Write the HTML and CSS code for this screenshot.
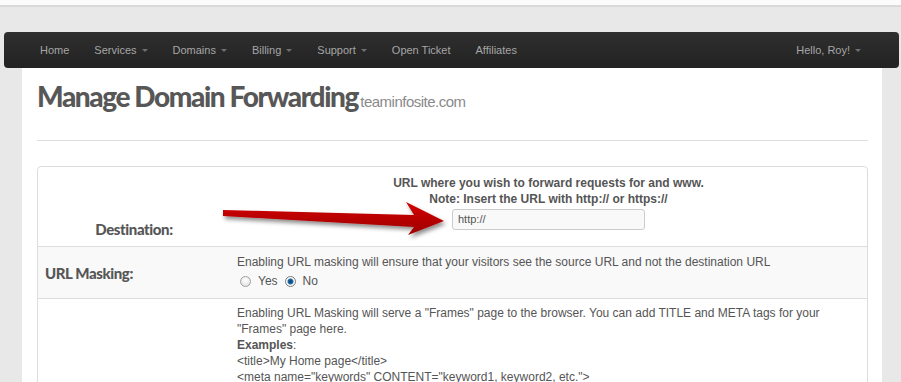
FILE: index.html
```html
<!DOCTYPE html>
<html>
<head>
<meta charset="utf-8">
<link rel="stylesheet" href="styles.css">
</head>
<body>
<div class="topbar"></div>
<nav class="navbar">
  <ul class="nav">
    <li>Home</li>
    <li>Services<span class="caret"></span></li>
    <li>Domains<span class="caret"></span></li>
    <li>Billing<span class="caret"></span></li>
    <li>Support<span class="caret"></span></li>
    <li>Open Ticket</li>
    <li>Affiliates</li>
  </ul>
  <div class="user">Hello, Roy!<span class="caret"></span></div>
</nav>
<div class="page">
  <h1>Manage Domain Forwarding <small>teaminfosite.com</small></h1>
  <hr class="rule">
  <div class="form">
    <div class="row row-dest">
      <div class="label label-dest">Destination:</div>
      <div class="field field-dest">
        <div class="strong">URL where you wish to forward requests for and www.</div>
        <div class="strong">Note: Insert the URL with http:// or https://</div>
        <div class="input">http://</div>
      </div>
    </div>
    <div class="row row-mask">
      <div class="label label-mask">URL Masking:</div>
      <div class="field">
        <div>Enabling URL masking will ensure that your visitors see the source URL and not the destination URL</div>
        <div class="radios">
          <span class="radio"></span><span class="rlabel">Yes</span>
          <span class="radio checked"></span><span class="rlabel">No</span>
        </div>
      </div>
    </div>
    <div class="row row-meta">
      <div class="label"></div>
      <div class="field">
        <div>Enabling URL Masking will serve a "Frames" page to the browser. You can add TITLE and META tags for your "Frames" page here.</div>
        <div><b>Examples</b>:</div>
        <div>&lt;title&gt;My Home page&lt;/title&gt;</div>
        <div>&lt;meta name="keywords" CONTENT="keyword1, keyword2, etc."&gt;</div>
      </div>
    </div>
    <svg class="arrow" width="232" height="44" viewBox="0 0 232 44">
      <defs>
        <filter id="sh" x="-10%" y="-30%" width="130%" height="180%">
          <feDropShadow dx="2" dy="3" stdDeviation="2" flood-color="#000" flood-opacity="0.45"/>
        </filter>
        <linearGradient id="rg" x1="0" y1="0" x2="0" y2="1">
          <stop offset="0" stop-color="#d40000"/>
          <stop offset="1" stop-color="#9c0000"/>
        </linearGradient>
      </defs>
      <polygon filter="url(#sh)" fill="url(#rg)" points="4,11 195,16 187,3 225,22 189,36 195,28 4,17"/>
    </svg>
  </div>
</div>
</body>
</html>
```
FILE: styles.css
```css
html, body {
  margin: 0;
  padding: 0;
}
body {
  background: #e8e8e8;
  font-family: "Liberation Sans", Arial, sans-serif;
  font-size: 12px;
  color: #555;
  overflow: hidden;
}
.topbar {
  height: 5px;
  background: #fbfbfb;
  border-bottom: 2px solid #d9d9d9;
}
.navbar {
  margin: 25px 2px 0 4px;
  height: 36px;
  border-radius: 4px;
  background: linear-gradient(#2f2f2f, #222222);
  display: flex;
  align-items: center;
  justify-content: space-between;
  padding: 0 38px 0 36px;
  font-size: 11px;
  color: #a6a6a6;
}
.nav {
  list-style: none;
  margin: 0;
  padding: 0;
  display: flex;
  gap: 25px;
}
.nav li, .user {
  display: flex;
  align-items: center;
}
.caret {
  display: inline-block;
  width: 0;
  height: 0;
  margin-left: 5px;
  border-left: 3px solid transparent;
  border-right: 3px solid transparent;
  border-top: 3px solid #6f6f6f;
  margin-top: 1px;
}
.page {
  margin: 0 19px 0 22px;
  background: #fff;
  padding: 8px 14px 40px 15px;
}
h1 {
  margin: 0;
  font-family: Lato, "Open Sans", sans-serif;
  font-weight: 900;
  font-size: 28px;
  line-height: 40px;
  letter-spacing: -1.4px;
  color: #575757;
}
h1 small {
  font-family: "Liberation Sans", Arial, sans-serif;
  font-weight: 400;
  font-size: 15px;
  letter-spacing: -0.5px;
  color: #8a8a8a;
  margin-left: -3px;
}
.rule {
  margin: 18px 0 25px;
  border: 0;
  border-top: 1px solid #dedede;
  height: 0;
}
.form {
  position: relative;
  border: 1px solid #dddddd;
  border-radius: 4px;
}
.row {
  display: grid;
  grid-template-columns: 192px 1fr;
  line-height: 16px;
}
.row + .row {
  border-top: 1px solid #dddddd;
}
.label {
  font-family: Lato, "Open Sans", sans-serif;
  font-weight: 900;
  font-size: 15px;
  color: #565656;
  letter-spacing: -0.4px;
}
.label-dest {
  display: flex;
  align-items: flex-end;
  justify-content: center;
  padding-bottom: 9px;
}
.label-mask {
  display: flex;
  align-items: center;
  padding-left: 7px;
}
.field {
  padding: 7px 8px 6px 7px;
}
.row-dest .field {
  padding: 8px 0 16px 0;
  text-align: center;
  display: flex;
  flex-direction: column;
  align-items: center;
}
.strong {
  font-weight: bold;
}
.input {
  margin-top: 2px;
  width: 186px;
  height: 19px;
  border: 1px solid #cccccc;
  border-radius: 3px;
  background: #f9f9f9;
  text-align: left;
  padding-left: 5px;
  font-size: 11px;
  line-height: 19px;
  color: #555;
}
.row-mask {
  background: #f9f9f9;
}
.row-mask .field {
  padding-bottom: 6px;
}
.radios {
  display: flex;
  align-items: center;
  height: 22px;
  padding-left: 3px;
}
.radio {
  width: 11px;
  height: 11px;
  border-radius: 50%;
  border: 1px solid #a0a0a0;
  background: radial-gradient(circle at 50% 35%, #ffffff, #dcdcdc);
  box-sizing: border-box;
  margin-right: 7px;
}
.radio.checked {
  background: radial-gradient(circle, #0b3d6e 0, #1f6aa8 2.5px, #ffffff 3.5px, #e8e8e8 100%);
  border-color: #7a7a7a;
}
.rlabel {
  margin-right: 7px;
}
.row-meta .field {
  padding-top: 6px;
  padding-right: 40px;
}
.arrow {
  position: absolute;
  left: 181px;
  top: 32px;
}
```
